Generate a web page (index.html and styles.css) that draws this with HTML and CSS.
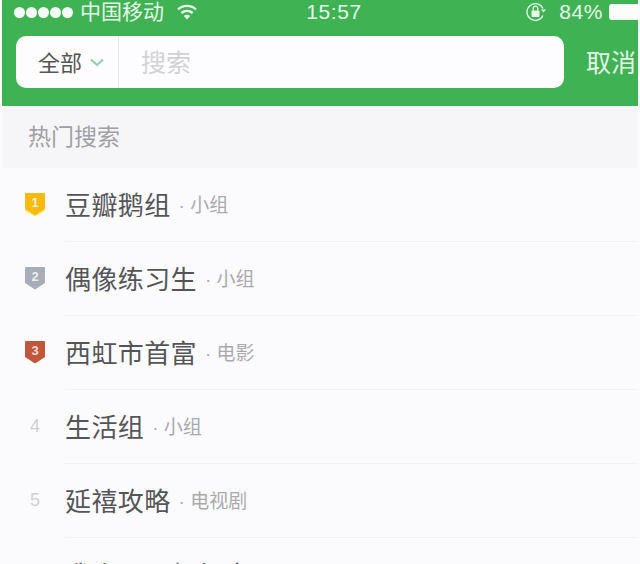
FILE: index.html
```html
<!DOCTYPE html>
<html lang="zh">
<head>
	<meta charset="UTF-8"/>
	<title>搜索</title>
	<link rel="stylesheet" href="styles.css">
</head>
<body>
<div class="top">
	<div class="status">
		<div class="status_left">
			<span class="dots"><i></i><i></i><i></i><i></i><i></i></span>
			<span class="carrier">中国移动</span>
			<svg class="wifi" width="20" height="16" viewBox="0 0 20 16">
				<path d="M1 5.500a13 13 0 0 1 18 0" fill="none" stroke="#eef8f0" stroke-width="2.400"/>
				<path d="M4.400 9a8.500 8.500 0 0 1 11.200 0" fill="none" stroke="#eef8f0" stroke-width="2.400"/>
				<path d="M6.800 12a4.600 4.600 0 0 1 6.400 0L10 15.500z" fill="#eef8f0"/>
			</svg>
		</div>
		<span class="time">15:57</span>
		<div class="status_right">
			<svg class="lock" width="22" height="22" viewBox="0 0 22 22">
				<path d="M18 14.500A8.400 8.400 0 1 1 18 7.500" fill="none" stroke="#e8f5ea" stroke-width="1.300"/>
				<path d="M16 8.500h5l-2.500 3z" fill="#e8f5ea"/>
				<rect x="6.500" y="9.500" width="8" height="6.500" rx="1" fill="#e8f5ea"/>
				<path d="M8.200 9.500V7.500a2.300 2.300 0 0 1 4.600 0v2" fill="none" stroke="#e8f5ea" stroke-width="1.300"/>
			</svg>
			<span class="pct">84%</span>
			<span class="battery"></span>
		</div>
	</div>
	<div class="search_row">
		<div class="search_box">
			<div class="scope">
				<span class="scope_text">全部</span>
				<svg width="14" height="9" viewBox="0 0 14 9"><path d="M1 1.500l6 5.500 6-5.500" fill="none" stroke="#8fd0a2" stroke-width="2"/></svg>
			</div>
			<span class="placeholder">搜索</span>
		</div>
		<span class="cancel">取消</span>
	</div>
</div>
<div class="hot_title">热门搜索</div>
<ul class="hot_list">
	<li>
		<span class="rank">
			<svg width="22" height="25" viewBox="0 0 22 25"><path d="M1 2q0-1 1-1h18q1 0 1 1v15l-10 6.500-10-6.500z" fill="#f6b90f"/><path d="M1 17l10 6.500 10-6.500v1.500l-10 6-10-6z" fill="#fbe34a"/><text x="11" y="15" class="badge_num">1</text></svg>
		</span>
		<div class="row"><span class="name">豆瓣鹅组</span><span class="kind">· 小组</span></div>
	</li>
	<li>
		<span class="rank">
			<svg width="22" height="25" viewBox="0 0 22 25"><path d="M1 2q0-1 1-1h18q1 0 1 1v15l-10 6.500-10-6.500z" fill="#a9adb8"/><text x="11" y="15" class="badge_num">2</text></svg>
		</span>
		<div class="row"><span class="name">偶像练习生</span><span class="kind">· 小组</span></div>
	</li>
	<li>
		<span class="rank">
			<svg width="22" height="25" viewBox="0 0 22 25"><path d="M1 2q0-1 1-1h18q1 0 1 1v15l-10 6.500-10-6.500z" fill="#c0563a"/><text x="11" y="15" class="badge_num">3</text></svg>
		</span>
		<div class="row"><span class="name">西虹市首富</span><span class="kind">· 电影</span></div>
	</li>
	<li>
		<span class="rank plain">4</span>
		<div class="row"><span class="name">生活组</span><span class="kind">· 小组</span></div>
	</li>
	<li>
		<span class="rank plain">5</span>
		<div class="row"><span class="name">延禧攻略</span><span class="kind">· 电视剧</span></div>
	</li>
	<li>
		<span class="rank plain">6</span>
		<div class="row"><span class="name">我走了不想起床</span><span class="kind">· 小组</span></div>
	</li>
</ul>
</body>
</html>
```

FILE: styles.css
```css
*{margin:0;padding:0;box-sizing:border-box;}
html,body{height:564px;overflow:hidden;}
body{font-family:"Liberation Sans","Noto Sans CJK SC",sans-serif;background:#fbfbfd;color:#555;padding:0 2px;}
ul,li{list-style:none;}

.top{height:106px;background:#3fb353;padding:0 0 0 14px;}
.status{display:grid;grid-template-columns:1fr auto 1fr;align-items:center;height:24px;margin-left:-2px;color:#e8f5ea;font-size:21px;}
.status_left{display:flex;align-items:center;gap:7px;}
.dots{display:flex;gap:1px;}
.dots i{display:block;width:11px;height:11px;border-radius:50%;background:#f5fbf6;}
.carrier{line-height:24px;}
.wifi{margin-left:6px;}
.time{font-size:21px;letter-spacing:.6px;margin-left:16px;}
.status_right{display:flex;align-items:center;justify-content:flex-end;gap:6px;}
.lock{margin-right:6px;}
.pct{letter-spacing:.6px;}
.battery{display:block;width:29px;height:16px;background:#fbfdfb;border-radius:3px 0 0 3px;}

.search_row{display:flex;align-items:center;margin-top:12px;}
.search_box{display:flex;align-items:center;width:548px;height:52px;background:#fdfcfe;border-radius:10px;}
.scope{display:flex;align-items:center;gap:8px;width:103px;height:52px;padding-left:22px;border-right:1px solid #e6e6e6;font-size:22px;color:#555;}
.scope_text{padding-bottom:3px;}
.placeholder{margin-left:22px;padding-bottom:2px;font-size:25px;color:#d2d2d4;}
.cancel{margin-left:22px;padding-bottom:3px;font-size:25px;color:#e6f4e8;white-space:nowrap;}

.hot_title{height:62px;line-height:62px;padding-left:26px;background:#f6f6f8;font-size:23px;color:#a0a0a4;}

.hot_list li{display:flex;height:74px;}
.rank{display:flex;align-items:center;justify-content:center;flex:none;width:66px;padding-bottom:2px;}
.rank.plain{font-size:18px;color:#d0d0d2;}
.badge_num{font:bold 13px "Liberation Sans",sans-serif;fill:#fff;fill-opacity:.8;text-anchor:middle;}
.row{flex:1;display:flex;align-items:center;padding-bottom:2px;margin-left:-3px;border-bottom:1px solid #f2f2f4;}
.name{font-size:26px;letter-spacing:.4px;color:#555558;}
.kind{margin-left:8px;font-size:19px;color:#aaaaae;}
```
